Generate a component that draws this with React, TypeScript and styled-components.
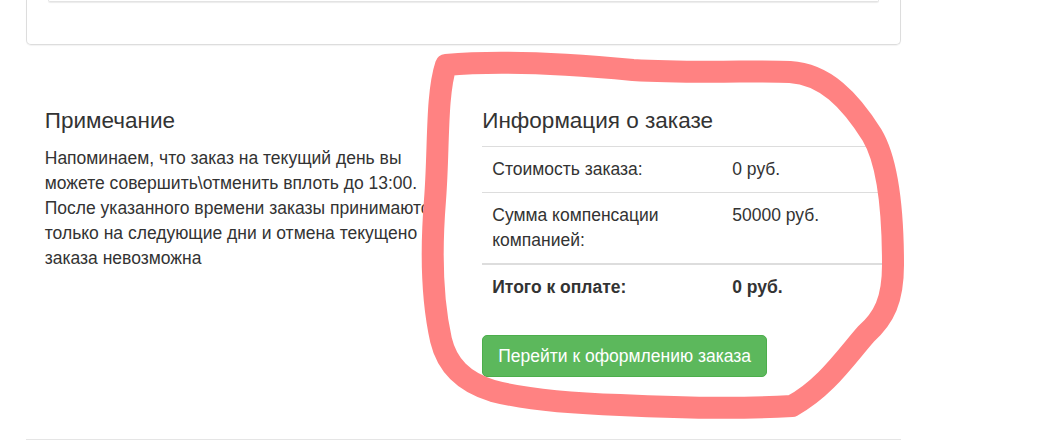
import React from "react";
import styled, { createGlobalStyle } from "styled-components";

const GlobalStyle = createGlobalStyle`
  html, body { margin: 0; padding: 0; background: #fff; }
  body {
    font-family: "Liberation Sans", Arial, sans-serif;
    color: #333;
    font-size: 17.5px;
    line-height: 25px;
  }
  * { box-sizing: border-box; }
`;

const Page = styled.div`
  position: relative;
  width: 1058px;
  height: 445px;
  overflow: hidden;
`;

const Container = styled.div`
  width: 875px;
  margin-left: 26px;
`;

const TopCard = styled.div`
  height: 45px;
  border: 1px solid #ddd;
  border-top: none;
  border-radius: 0 0 5px 5px;
  box-shadow: 0 1px 1px rgba(0, 0, 0, 0.05);
  padding: 0 21px;
`;

const TopWell = styled.div`
  height: 2px;
  border: 1px solid #e3e3e3;
  border-top: none;
  border-radius: 0 0 4px 4px;
  box-shadow: 0 1px 1px rgba(0, 0, 0, 0.08);
`;

const Row = styled.div`
  display: flex;
  margin-top: 51px;
`;

const Col = styled.div`
  width: 50%;
  padding: 0 18.75px;
`;

const Heading = styled.h4`
  font-size: 22.5px;
  font-weight: 500;
  line-height: 1.1;
  margin: 13px 0 12.5px;
  color: #333;
`;

const Note = styled.p`
  margin: 0 0 12.5px;
  font-size: 17.5px;
  line-height: 25px;
`;

const Table = styled.table`
  width: 100%;
  border-collapse: collapse;
  margin-bottom: 25px;
`;

const Cell = styled.td<{ $w?: string; $bold?: boolean; $thick?: boolean }>`
  padding: 10px;
  line-height: 25px;
  font-size: 17.5px;
  vertical-align: top;
  border-top: ${(p) => (p.$thick ? "2px" : "1px")} solid #ddd;
  font-weight: ${(p) => (p.$bold ? 700 : 400)};
  width: ${(p) => p.$w ?? "auto"};
`;

const Button = styled.button`
  display: inline-block;
  font-family: "Liberation Sans", Arial, sans-serif;
  font-size: 17.5px;
  line-height: 25px;
  padding: 7.5px 15px;
  color: #fff;
  background: #5cb85c;
  border: 1px solid #4cae4c;
  border-radius: 5px;
  cursor: pointer;
`;

const Divider = styled.hr`
  margin: 62px 0 0;
  border: 0;
  border-top: 1px solid #e5e5e5;
`;

const Overlay = styled.svg`
  position: absolute;
  left: 0;
  top: 0;
  pointer-events: none;
`;

const rows = [
  { label: "Стоимость заказа:", value: "0 руб." },
  { label: "Сумма компенсации компанией:", value: "50000 руб." },
];

export default function App() {
  return (
    <>
      <GlobalStyle />
      <Page>
        <Container>
          <TopCard>
            <TopWell />
          </TopCard>
          <Row>
            <Col>
              <Heading>Примечание</Heading>
              <Note>
                Напоминаем, что заказ на текущий день вы можете совершить\отменить вплоть до
                13:00. После указанного времени заказы принимаются только на следующие дни и
                отмена текущено заказа невозможна
              </Note>
            </Col>
            <Col>
              <Heading>Информация о заказе</Heading>
              <Table>
                <tbody>
                  {rows.map((r) => (
                    <tr key={r.label}>
                      <Cell $w="60%">{r.label}</Cell>
                      <Cell>{r.value}</Cell>
                    </tr>
                  ))}
                </tbody>
                <tbody>
                  <tr>
                    <Cell $w="60%" $bold $thick>
                      Итого к оплате:
                    </Cell>
                    <Cell $bold $thick>
                      0 руб.
                    </Cell>
                  </tr>
                </tbody>
              </Table>
              <Button>Перейти к оформлению заказа</Button>
            </Col>
          </Row>
          <Divider />
        </Container>
        <Overlay width="1058" height="445" viewBox="0 0 1058 445">
          <path
            d="M 446 65
               C 500 60, 560 63, 633 70
               C 700 74, 760 70, 790 72
               C 825 74, 850 100, 872 135
               C 890 165, 893 220, 893 265
               C 893 300, 884 318, 866 334
               C 845 358, 825 388, 792 406
               C 740 409, 680 408, 620 405
               C 560 403, 520 398, 493 391
               C 463 382, 447 365, 441 340
               C 432 300, 431 250, 435 200
               C 439 150, 436 95, 446 65 Z"
            fill="none"
            stroke="#ff8282"
            strokeWidth="22"
            strokeLinejoin="round"
            strokeLinecap="round"
          />
        </Overlay>
      </Page>
    </>
  );
}
